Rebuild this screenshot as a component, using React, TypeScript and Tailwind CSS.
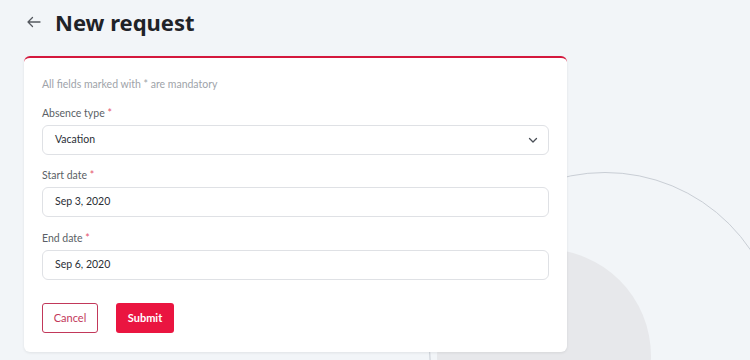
import React from "react";

const font = { fontFamily: 'Lato, "Noto Sans", sans-serif' };
const titleFont = { fontFamily: '"Noto Sans", "Open Sans", sans-serif' };

function Label({ text }: { text: string }) {
  return (
    <div className="text-[10.5px] leading-[16px] text-[#5b5f66] mb-[4px]">
      {text} <span className="text-[#e5566f]">*</span>
    </div>
  );
}

function Field({ value, chevron }: { value: string; chevron?: boolean }) {
  return (
    <div className="h-[30px] w-full rounded-[6px] border border-[#dfe1e5] bg-white flex items-center justify-between pl-[12px] pr-[10px]">
      <span className="text-[10.5px] text-[#2b2f36]">{value}</span>
      {chevron && (
        <svg width="10" height="10" viewBox="0 0 10 10" fill="none">
          <path d="M1.5 3.5 L5 7 L8.5 3.5" stroke="#4a4f57" strokeWidth="1.3" strokeLinecap="round" strokeLinejoin="round" />
        </svg>
      )}
    </div>
  );
}

export default function App() {
  return (
    <div className="relative w-[750px] h-[360px] overflow-hidden bg-[#f2f5f8]" style={font}>
      <div className="absolute left-[437px] top-[249px] w-[214px] h-[214px] rounded-full bg-[#e7e8eb]" />
      <div className="absolute left-[429px] top-[172px] w-[352px] h-[352px] rounded-full border border-[#c9ced5]" />

      <div className="relative z-10">
        <div className="h-[44px] flex items-center pl-[26px]">
          <svg width="16" height="12" viewBox="0 0 16 12" fill="none" className="mr-[13px] mt-[-1px]">
            <path d="M14 6 H2 M6.5 1.5 L2 6 L6.5 10.5" stroke="#55595f" strokeWidth="1.3" strokeLinecap="round" strokeLinejoin="round" />
          </svg>
          <h1 className="text-[22px] font-bold text-[#1f2328] leading-none" style={titleFont}>New request</h1>
        </div>

        <div className="mt-[12px] ml-[24px] w-[543px] bg-white rounded-[6px] border-t-2 border-[#d4183d] shadow-[0_1px_3px_rgba(0,0,0,0.08)] px-[18px] pt-[18px] pb-[19px]">
          <div className="text-[10.5px] leading-[16px] text-[#9ea3a9]">All fields marked with * are mandatory</div>

          <div className="mt-[13px]">
            <Label text="Absence type" />
            <Field value="Vacation" chevron />
          </div>
          <div className="mt-[12px]">
            <Label text="Start date" />
            <Field value="Sep 3, 2020" />
          </div>
          <div className="mt-[13px]">
            <Label text="End date" />
            <Field value="Sep 6, 2020" />
          </div>

          <div className="mt-[23px] flex gap-[18px]">
            <button className="h-[30px] w-[56px] rounded-[3px] border border-[#c2385a] text-[#c2385a] text-[11px] bg-white">
              Cancel
            </button>
            <button className="h-[30px] w-[58px] rounded-[3px] bg-[#ea1540] text-white text-[11px] font-bold">
              Submit
            </button>
          </div>
        </div>
      </div>
    </div>
  );
}
